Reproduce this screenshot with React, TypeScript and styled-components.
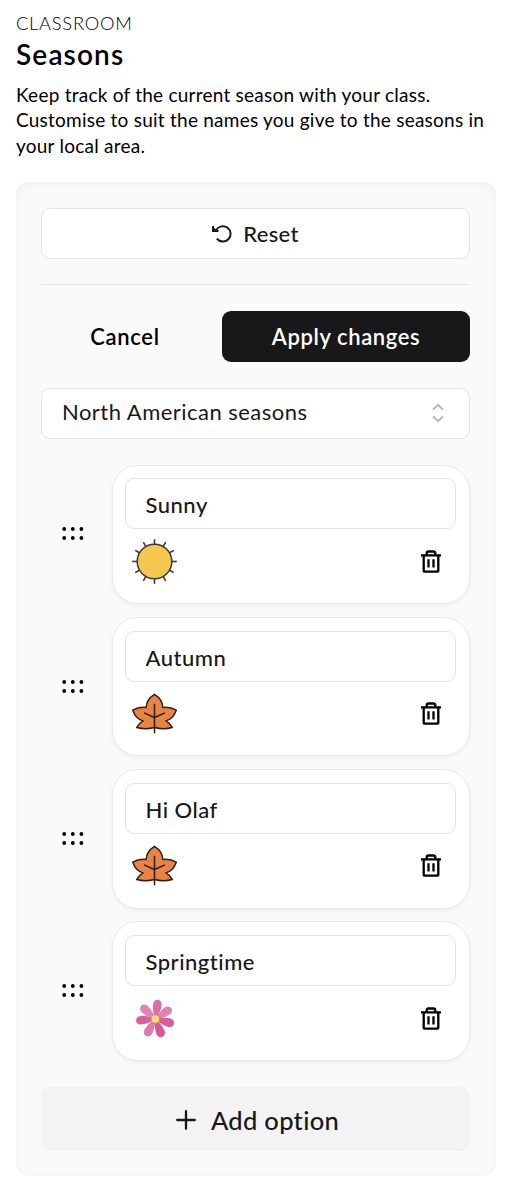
import React from "react";
import styled, { createGlobalStyle } from "styled-components";

const GlobalStyle = createGlobalStyle`
  *, *::before, *::after { box-sizing: border-box; }
  body {
    margin: 0;
    background: #fff;
    color: #000;
    font-family: Lato, "Liberation Sans", sans-serif;
  }
  button, input { font-family: inherit; margin: 0; }
  svg { display: block; flex: none; }
`;

const Page = styled.main`
  height: 1188px;
  padding: 11px 36px 0 16px;
  overflow: hidden;
`;

const Eyebrow = styled.div`
  font-size: 18.3px;
  line-height: 24px;
  font-weight: 300;
  letter-spacing: 0.75px;
`;

const Title = styled.h1`
  margin: 2px 0 0;
  font-size: 28px;
  line-height: 34px;
  font-weight: 600;
  letter-spacing: 1.15px;
`;

const Description = styled.p`
  margin: 11px -8px 0 0;
  font-size: 19px;
  line-height: 25.4px;
  letter-spacing: 0.24px;
  white-space: nowrap;
`;

const Panel = styled.section`
  display: flex;
  flex-direction: column;
  width: 480px;
  height: 994px;
  margin-top: 23.8px;
  padding: 26px 26px 25px 25px;
  border-radius: 13px;
  background: #fafafa;
  box-shadow: inset 0 2px 7px rgba(0, 0, 0, 0.06);
`;

const Button = styled.button<{ $variant: "outline" | "ghost" | "solid" }>`
  display: flex;
  align-items: center;
  justify-content: center;
  gap: 11px;
  flex: none;
  height: 51px;
  padding: 0;
  border: 1px solid ${(p) => (p.$variant === "outline" ? "#e3e3e4" : "transparent")};
  border-radius: 9px;
  background: ${(p) => ({ outline: "#fff", ghost: "transparent", solid: "#18181a" })[p.$variant]};
  color: ${(p) => ({ outline: "#18181a", ghost: "#000", solid: "#fff" })[p.$variant]};
  font-size: 22px;
  font-weight: ${(p) => (p.$variant === "outline" ? 500 : 600)};
  letter-spacing: ${(p) => ({ outline: 0.3, ghost: 0.7, solid: 0.6 })[p.$variant]}px;
`;

const Divider = styled.hr`
  width: 100%;
  margin: 25px 0 26px;
  border: 0;
  border-top: 1px solid #e3e3e4;
`;

const Actions = styled.div`
  display: grid;
  grid-template-columns: 168px 1fr;
  gap: 13px;
`;

const Select = styled.div`
  display: flex;
  align-items: center;
  justify-content: space-between;
  flex: none;
  height: 51px;
  margin-top: 26px;
  padding: 0 25px 5px 20px;
  border: 1px solid #e3e3e4;
  border-radius: 9px;
  background: #fff;
  color: #18181a;
  font-size: 22px;
  letter-spacing: 0.47px;

  svg { margin-top: 4px; }
`;

const OptionList = styled.ul`
  display: flex;
  flex-direction: column;
  gap: 12.8px;
  margin: 25.5px 0 0;
  padding: 0;
  list-style: none;
`;

const OptionRow = styled.li`
  display: flex;
  align-items: center;
  height: 139.5px;
  padding-left: 20px;

  > svg { margin-bottom: 1px; }
`;

const Card = styled.div`
  width: 358px;
  height: 100%;
  margin-left: 27px;
  padding: 12.7px 13px 0 12px;
  border: 1px solid #e9e9ea;
  border-radius: 26px;
  background: #fff;
  box-shadow: 0 2px 4px rgba(0, 0, 0, 0.05);
`;

const NameInput = styled.input`
  display: block;
  width: 100%;
  height: 51px;
  padding: 2px 20px 0 19.5px;
  border: 1px solid #e3e3e4;
  border-radius: 9px;
  background: #fff;
  color: #18181a;
  font-size: 22px;
  font-weight: 500;
  letter-spacing: 0.5px;
  outline: none;
`;

const CardFooter = styled.div`
  display: flex;
  align-items: center;
  justify-content: space-between;
  height: 64.4px;
  padding: 0 15px 0 7px;
`;

const AddButton = styled.button`
  display: flex;
  align-items: center;
  justify-content: center;
  gap: 15px;
  flex: none;
  height: 64px;
  margin-top: auto;
  padding: 1px 0 0 4px;
  border: 0;
  border-radius: 9px;
  background: #f3f3f3;
  color: #18181a;
  font-size: 25.5px;
  font-weight: 500;
  letter-spacing: 0.3px;
`;

const ResetIcon = () => (
  <svg width="20" height="19" viewBox="0 0 20 19" fill="none" stroke="currentColor" strokeWidth="2">
    <path d="M4.2 6.1A7.7 7.7 0 1 1 4.8 14.6" />
    <path d="M1 2v5h5.5" />
    <path d="M1 2.5 5.5 7H1z" fill="currentColor" stroke="none" />
  </svg>
);

const ChevronsIcon = () => (
  <svg width="12" height="20" viewBox="0 0 12 20" fill="none" stroke="#b5b5b7" strokeWidth="2">
    <path d="M1 6.6 6 1.8l5 4.8M1 13.4l5 4.8 5-4.8" />
  </svg>
);

const GripIcon = () => (
  <svg width="24" height="15" viewBox="0 0 24 15">
    {[3.2, 11.8, 20.4].map((x) => (
      <g key={x}>
        <circle cx={x} cy="3" r="1.9" />
        <circle cx={x} cy="12" r="1.9" />
      </g>
    ))}
  </svg>
);

const TrashIcon = () => (
  <svg width="20" height="23" viewBox="0 0 20 23" fill="none" stroke="#000" strokeWidth="2.3">
    <path d="M2.7 5.5V21q0 .6.6.6h13.4q.6 0 .6-.6V5.5M0 5.3h20" />
    <path d="M5.7 5V3.4Q5.7 1.5 7.5 1.5h5q1.8 0 1.8 1.9V5" />
    <path d="M7.5 9.2v8.3M12.5 9.2v8.3" />
  </svg>
);

const PlusIcon = () => (
  <svg width="20" height="20" viewBox="0 0 20 20" fill="none" stroke="currentColor" strokeWidth="2.3" strokeLinecap="round">
    <path d="M10 1.2v17.6M1.2 10h17.6" />
  </svg>
);

const SunArt = () => (
  <svg width="45" height="45" viewBox="-22.5 -22.5 45 45">
    {Array.from({ length: 12 }, (_, i) => (
      <path key={i} d="M0-17v-5.3" stroke="#3c3838" strokeWidth="1.6" transform={`rotate(${i * 30})`} />
    ))}
    <circle r="17.3" fill="#f4c84f" stroke="#3c3838" strokeWidth="1.5" />
  </svg>
);

const LeafArt = () => (
  <svg width="45" height="45" viewBox="0 -8 134 134" fill="none" stroke="#29211f" strokeWidth="4.5" strokeLinejoin="round">
    <path
      fill="#e98343"
      d="M67 2C80 10 91 22 92 41Q113 38 132 49C126 66 115 77 101 81Q114 88 120 101Q94 108 67 101Q40 108 14 101Q20 88 33 81C19 77 8 66 2 49Q21 38 42 41C43 22 54 10 67 2Z"
    />
    <path d="M67 30V118M36 57l31 14 31-14" />
  </svg>
);

const PETALS = [
  { angle: 8, color: "#db6fa7" },
  { angle: 56, color: "#df83b0" },
  { angle: 105, color: "#d75e99" },
  { angle: 159, color: "#d75797" },
  { angle: 209, color: "#df7bad" },
  { angle: 265, color: "#d7609d" },
  { angle: 313, color: "#df85b5" },
];

const FlowerArt = () => (
  <svg width="45" height="45" viewBox="-70 -69 135 135">
    {PETALS.map(({ angle, color }) => (
      <path
        key={angle}
        fill={color}
        transform={`rotate(${angle})`}
        d="M-4-5C-8-19-13-29-13-43C-13-53-6-58 0-58S13-53 13-43C13-29 8-19 4-5Z"
      />
    ))}
    <circle r="15" fill="#d58a90" opacity="0.5" />
    <circle r="11.5" fill="#f5dc7b" />
  </svg>
);

const OPTIONS = [
  { name: "Sunny", Art: SunArt },
  { name: "Autumn", Art: LeafArt },
  { name: "Hi Olaf", Art: LeafArt },
  { name: "Springtime", Art: FlowerArt },
];

export default function App() {
  return (
    <Page>
      <GlobalStyle />
      <Eyebrow>CLASSROOM</Eyebrow>
      <Title>Seasons</Title>
      <Description>
        Keep track of the current season with your class.
        <br />
        Customise to suit the names you give to the seasons in
        <br />
        your local area.
      </Description>
      <Panel>
        <Button $variant="outline">
          <ResetIcon />
          Reset
        </Button>
        <Divider />
        <Actions>
          <Button $variant="ghost">Cancel</Button>
          <Button $variant="solid">Apply changes</Button>
        </Actions>
        <Select>
          North American seasons
          <ChevronsIcon />
        </Select>
        <OptionList>
          {OPTIONS.map(({ name, Art }) => (
            <OptionRow key={name}>
              <GripIcon />
              <Card>
                <NameInput defaultValue={name} />
                <CardFooter>
                  <Art />
                  <TrashIcon />
                </CardFooter>
              </Card>
            </OptionRow>
          ))}
        </OptionList>
        <AddButton>
          <PlusIcon />
          Add option
        </AddButton>
      </Panel>
    </Page>
  );
}
